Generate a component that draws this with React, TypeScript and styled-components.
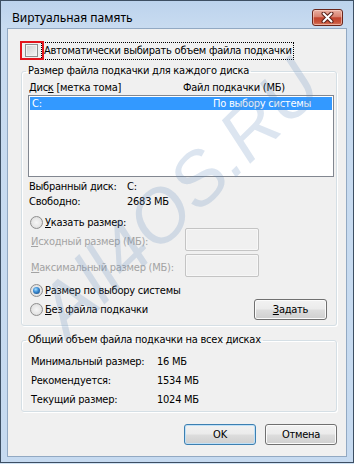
import React from "react";
import styled, { createGlobalStyle } from "styled-components";

const GlobalStyle = createGlobalStyle`
  html, body { margin: 0; padding: 0; background: #cfe2f4; }
  body {
    font-family: "DejaVu Sans Condensed", "DejaVu Sans", sans-serif;
    font-stretch: condensed;
    font-size: 11px;
    letter-spacing: -0.25px;
    color: #000;
  }
  * { box-sizing: border-box; }
`;

const Window = styled.div`
  position: relative;
  width: 354px;
  height: 463px;
  border: 1px solid #3d4f63;
  background: linear-gradient(#bcd3ed 0px, #c8dbf0 26px, #c6daf0 100%);
  display: flex;
  flex-direction: column;
  padding: 0 6px 5px 6px;
  overflow: hidden;
`;

const TitleBar = styled.div`
  height: 27px;
  display: flex;
  justify-content: space-between;
  align-items: flex-start;
  padding: 0 4px 0 5px;
`;

const TitleText = styled.div`
  font-family: "Noto Sans", "Open Sans", sans-serif;
  font-stretch: normal;
  letter-spacing: 0;
  font-size: 12px;
  line-height: 16px;
  margin-top: 9px;
  color: #000;
`;

const CloseButton = styled.div`
  width: 31px;
  height: 17px;
  margin-top: 8px;
  border: 1px solid #6a261c;
  border-radius: 3px;
  background: linear-gradient(#eab0a2 0%, #d98270 45%, #c2432d 52%, #c85239 80%, #d77b62 100%);
  box-shadow: inset 0 0 0 1px rgba(255, 220, 210, 0.55);
  display: flex;
  align-items: center;
  justify-content: center;
`;

const Client = styled.div`
  height: 429px;
  border: 1px solid #92a9c3;
  background: #f0f0f0;
  display: flex;
  flex-direction: column;
`;

const CheckRow = styled.div`
  margin: 12px 0 0 12px;
  height: 19px;
  display: flex;
  align-items: center;
`;

const Highlight = styled.div`
  position: relative;
  z-index: 1;
  width: 24px;
  height: 19px;
  border: 2px solid #e3141c;
  display: flex;
  align-items: center;
  padding-left: 3px;
`;

const CheckBox = styled.span`
  display: block;
  width: 13px;
  height: 13px;
  border: 1px solid #8e8f8f;
  background: linear-gradient(135deg, #cdcdcd, #f6f6f6);
  box-shadow: inset 0 0 0 1px #f2f2f2;
`;

const FocusLabel = styled.span`
  margin-left: -3px;
  height: 18px;
  line-height: 16px;
  border: 1px dotted #000;
  padding: 0 1px 0 2px;
  white-space: nowrap;
`;

const Group = styled.fieldset<{ $top: number }>`
  margin: ${(p) => p.$top}px 0 0 13px;
  width: 316px;
  min-width: 0;
  border: 1px solid #d5dfe5;
  border-radius: 3px;
  box-shadow: inset 1px 1px 0 #fff, 1px 1px 0 #fff;
  padding: 0 0 ${(p) => (p.$top > 5 ? 2 : 5)}px 0;
  display: flex;
  flex-direction: column;
`;

const Legend = styled.legend`
  margin-left: 4px;
  padding: 0 2px;
  line-height: 14px;
  font-size: 11px;
`;

const HeaderRow = styled.div`
  margin-top: 3px;
  height: 13px;
  line-height: 13px;
  padding-left: 7px;
  display: grid;
  grid-template-columns: 154px auto;
`;

const ListBox = styled.div`
  margin: 1px 0 0 6px;
  width: 306px;
  height: 82px;
  border: 1px solid #828790;
  background: #fff;
  padding: 1px;
`;

const ListItem = styled.div`
  height: 13px;
  line-height: 13px;
  background: #3399ff;
  color: #fff;
  display: flex;
  justify-content: space-between;
  padding: 0 21px 0 2px;
`;

const InfoGrid = styled.div<{ $col: number; $left: number; $row: number; $top: number }>`
  margin-top: ${(p) => p.$top}px;
  padding-left: ${(p) => p.$left}px;
  display: grid;
  grid-template-columns: ${(p) => p.$col}px auto;
  grid-auto-rows: ${(p) => p.$row}px;
  align-items: center;
`;

const RadioRow = styled.div<{ $top: number; $h?: number }>`
  margin-top: ${(p) => p.$top}px;
  height: ${(p) => p.$h ?? 12}px;
  padding-left: 8px;
  display: flex;
  align-items: center;
  gap: 2px;
`;

const Radio = styled.span<{ $checked?: boolean }>`
  position: relative;
  width: 13px;
  height: 13px;
  flex: none;
  border-radius: 50%;
  border: 1px solid #8f8f8f;
  background: radial-gradient(circle at 50% 50%, #f6f6f6 0%, #e6e6e6 55%, #cfcfcf 100%);
  &::after {
    content: "";
    display: ${(p) => (p.$checked ? "block" : "none")};
    position: absolute;
    left: 2px;
    top: 2px;
    width: 7px;
    height: 7px;
    border-radius: 50%;
    background: radial-gradient(circle at 40% 35%, #a8e0ff 0%, #3e8fd6 40%, #184f8a 85%);
  }
`;

const RadioLabel = styled.span`
  line-height: 13px;
`;

const InputRow = styled.div<{ $top: number }>`
  margin-top: ${(p) => p.$top}px;
  height: 23px;
  padding-left: 9px;
  display: grid;
  grid-template-columns: 154px 74px;
  align-items: center;
`;

const DisabledLabel = styled.span`
  color: #a3a3a3;
  padding-top: 3px;
  line-height: 13px;
`;

const TextInput = styled.div`
  height: 23px;
  border: 1px solid #c4c4c4;
  border-radius: 2px;
  background: #f0f0f0;
  box-shadow: inset 0 0 0 1px #f7f7f7;
`;

const LastRow = styled.div`
  margin-top: 3px;
  height: 21px;
  padding: 0 9px 0 8px;
  display: flex;
  align-items: center;
  gap: 2px;
`;

const Button = styled.div<{ $w: number; $default?: boolean; $push?: boolean }>`
  width: ${(p) => p.$w}px;
  height: 21px;
  margin-left: ${(p) => (p.$push ? "auto" : "0")};
  border: 1px solid ${(p) => (p.$default ? "#3c7fb1" : "#707070")};
  border-radius: 3px;
  background: linear-gradient(#f2f2f2 0%, #ebebeb 48%, #dddddd 52%, #cfcfcf 100%);
  box-shadow: inset 0 0 0 1px ${(p) => (p.$default ? "#bfe0f7" : "#fbfbfb")};
  display: flex;
  align-items: center;
  justify-content: center;
  line-height: 13px;
`;

const ButtonRow = styled.div`
  margin-top: 12px;
  height: 21px;
  padding-right: 9px;
  display: flex;
  justify-content: flex-end;
  gap: 9px;
`;

const Watermark = styled.div`
  position: absolute;
  left: 178px;
  top: 196px;
  transform: translate(-50%, -50%) rotate(-44deg);
  white-space: nowrap;
  font-family: "Liberation Sans", Arial, sans-serif;
  font-stretch: normal;
  letter-spacing: 0;
  font-style: italic;
  font-size: 74px;
  color: rgba(95, 135, 185, 0.22);
  pointer-events: none;
  z-index: 5;
`;

export default function App() {
  return (
    <>
      <GlobalStyle />
      <Window>
        <TitleBar>
          <TitleText>Виртуальная память</TitleText>
          <CloseButton>
            <svg width="13" height="11" viewBox="0 0 13 11">
              <path d="M2.5 1.5 L10.5 9.5 M10.5 1.5 L2.5 9.5" stroke="#5a2018" strokeWidth="4" strokeLinecap="round" />
              <path d="M2.5 1.5 L10.5 9.5 M10.5 1.5 L2.5 9.5" stroke="#ffffff" strokeWidth="2" strokeLinecap="round" />
            </svg>
          </CloseButton>
        </TitleBar>
        <Client>
          <CheckRow>
            <Highlight>
              <CheckBox />
            </Highlight>
            <FocusLabel>Автоматически выбирать объем файла подкачки</FocusLabel>
          </CheckRow>

          <Group $top={4}>
            <Legend>Размер файла подкачки для каждого диска</Legend>
            <HeaderRow>
              <span>
                Дис<u>к</u> [метка тома]
              </span>
              <span>Файл подкачки (МБ)</span>
            </HeaderRow>
            <ListBox>
              <ListItem>
                <span>C:</span>
                <span>По выбору системы</span>
              </ListItem>
            </ListBox>
            <InfoGrid $top={2} $left={7} $col={98} $row={15}>
              <span>Выбранный диск:</span>
              <span>C:</span>
              <span>Свободно:</span>
              <span>2683 МБ</span>
            </InfoGrid>
            <RadioRow $top={7}>
              <Radio />
              <RadioLabel>
                <u>У</u>казать размер:
              </RadioLabel>
            </RadioRow>
            <InputRow $top={0}>
              <DisabledLabel>
                <u>И</u>сходный размер (МБ):
              </DisabledLabel>
              <TextInput />
            </InputRow>
            <InputRow $top={3}>
              <DisabledLabel>
                <u>М</u>аксимальный размер (МБ):
              </DisabledLabel>
              <TextInput />
            </InputRow>
            <RadioRow $top={7}>
              <Radio $checked />
              <RadioLabel>
                <u>Р</u>азмер по выбору системы
              </RadioLabel>
            </RadioRow>
            <LastRow>
              <Radio />
              <RadioLabel>
                <u>Б</u>ез файла подкачки
              </RadioLabel>
              <Button $w={73} $push>
                <span>
                  <u>З</u>адать
                </span>
              </Button>
            </LastRow>
          </Group>

          <Group $top={7}>
            <Legend>Общий объем файла подкачки на всех дисках</Legend>
            <InfoGrid $top={5} $left={9} $col={126} $row={19}>
              <span>Минимальный размер:</span>
              <span>16 МБ</span>
              <span>Рекомендуется:</span>
              <span>1534 МБ</span>
              <span>Текущий размер:</span>
              <span>1024 МБ</span>
            </InfoGrid>
          </Group>

          <ButtonRow>
            <Button $w={72} $default>
              OK
            </Button>
            <Button $w={72}>Отмена</Button>
          </ButtonRow>
        </Client>
        <Watermark>All4OS.RU</Watermark>
      </Window>
    </>
  );
}
